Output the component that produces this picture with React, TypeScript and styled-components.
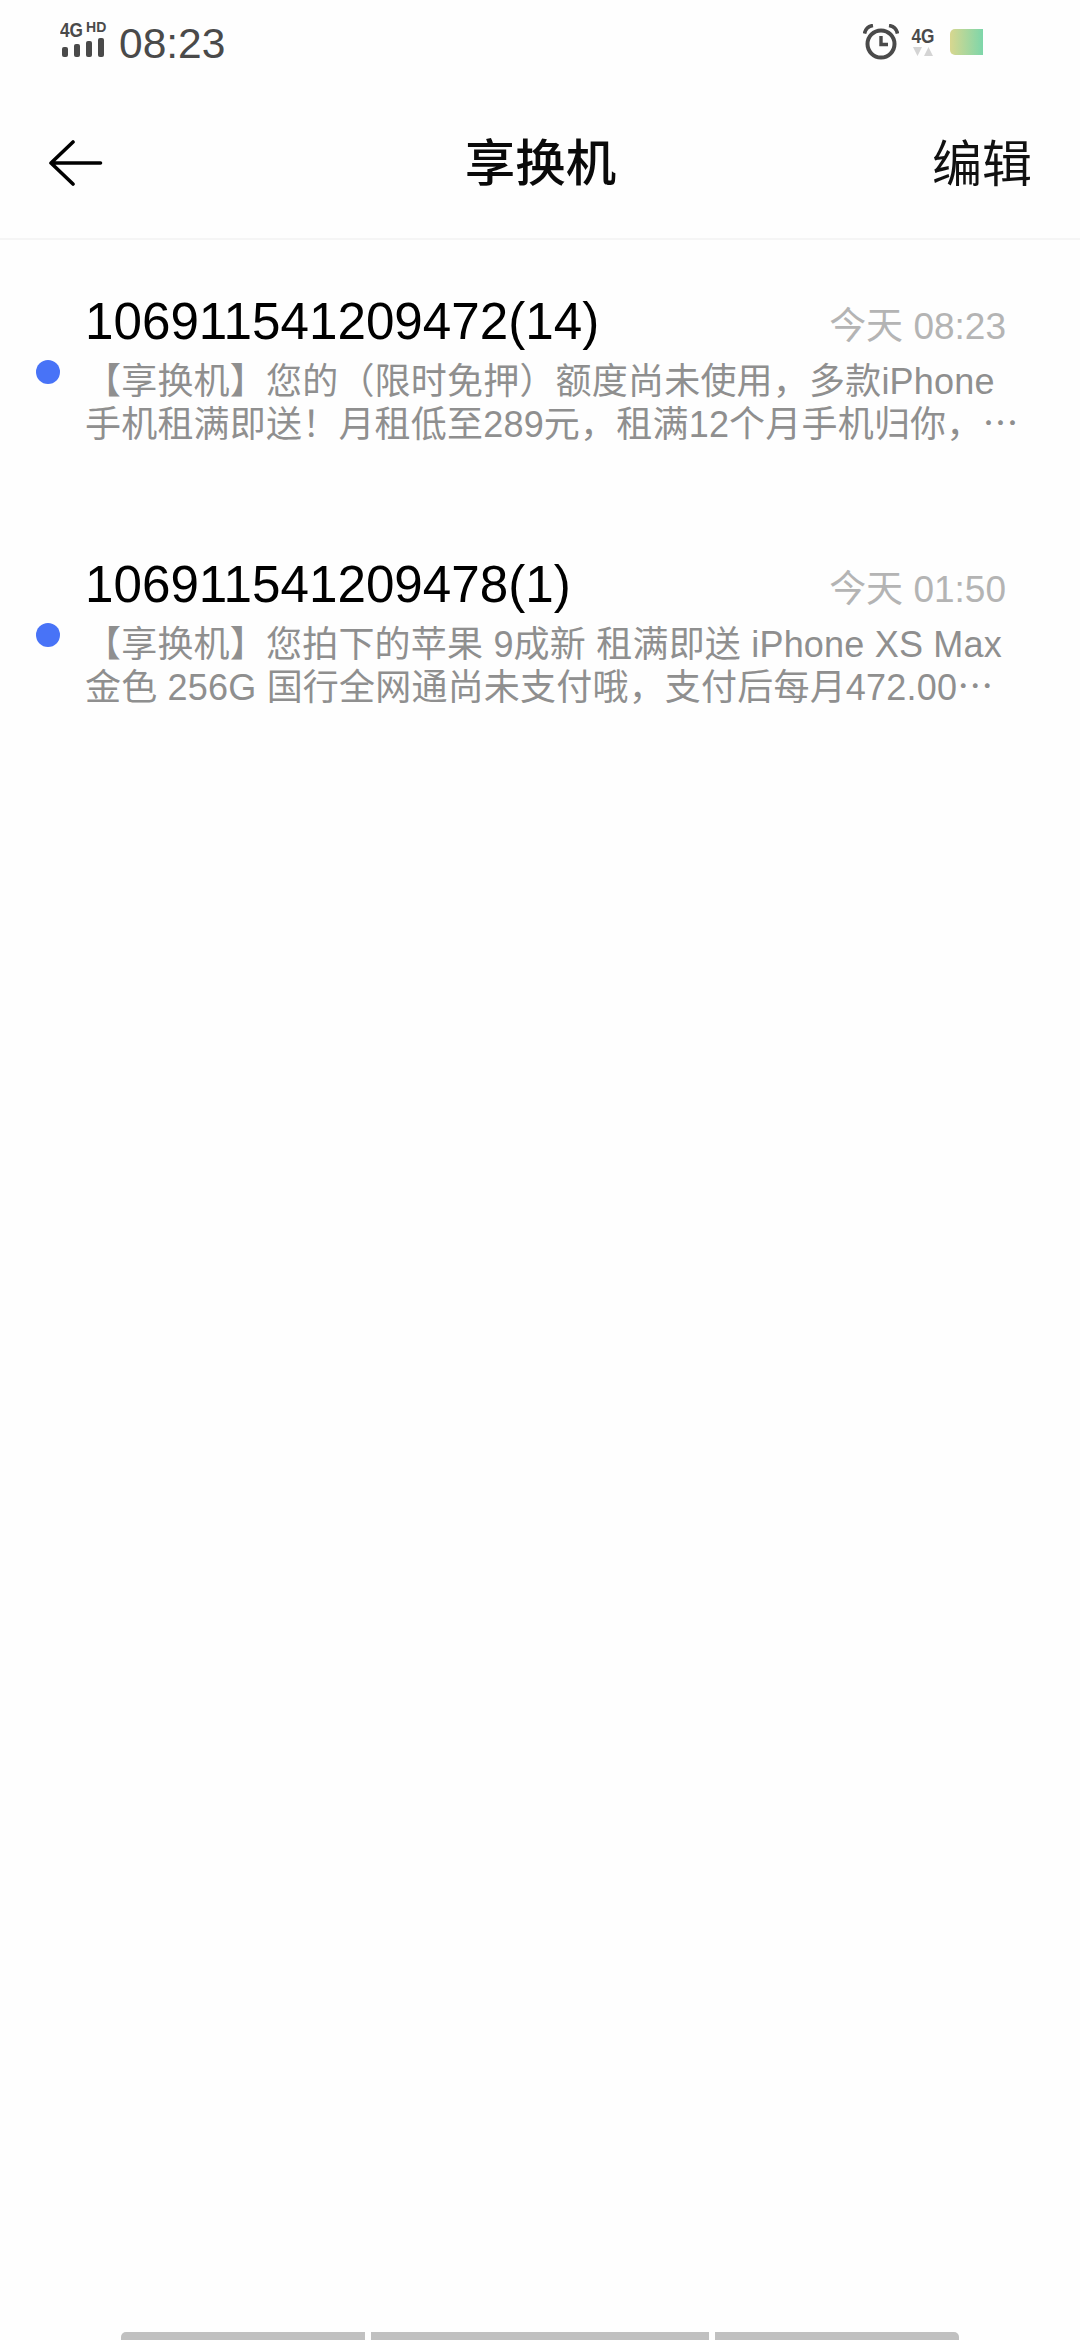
import {createGlobalStyle, styled} from "styled-components";

const GlobalStyle = createGlobalStyle`
  html, body {
    margin: 0;
    padding: 0;
    background: #fefefe;
    font-family: "Liberation Sans", "Noto Sans CJK SC", sans-serif;
  }
`;

const Screen = styled.div`
  width: 1080px;
  height: 2340px;
  display: flex;
  flex-direction: column;
  overflow: hidden;
  background: #fefefe;
`;

const StatusBar = styled.div`
  height: 90px;
  flex-shrink: 0;
  display: flex;
  align-items: flex-start;
  justify-content: space-between;
  padding: 22px 97px 0 60px;
  box-sizing: border-box;
  color: #4a4a4a;
`;

const StatusGroup = styled.div`
  display: flex;
  align-items: flex-start;
`;

const SignalColumn = styled.div`
  width: 46px;
  display: flex;
  flex-direction: column;
  margin-right: 13px;
`;

const SignalLabel = styled.div`
  display: flex;
  align-items: flex-start;
  height: 16px;
  font-weight: bold;
  white-space: nowrap;
`;

// the 4G glyphs are condensed in the status bar
const SignalType = styled.span`
  font-size: 21px;
  line-height: 16px;
  transform: scaleX(0.82);
  transform-origin: left top;
  margin-right: -5px;
`;

const SignalHd = styled.span`
  font-size: 14px;
  line-height: 11px;
  margin-left: 3px;
`;

const Clock = styled.div`
  font-size: 42.5px;
  line-height: 44px;
`;

const NetworkColumn = styled.div`
  width: 24px;
  margin: 5px 15px 0 15px;
  display: flex;
  flex-direction: column;
  align-items: center;
`;

const NetworkLabel = styled.div`
  font-weight: bold;
  font-size: 21px;
  line-height: 17px;
  transform: scaleX(0.82);
`;

const Battery = styled.div`
  width: 33px;
  height: 26px;
  margin-top: 7px;
  border-radius: 5px 0 0 5px;
  background: linear-gradient(90deg, #d8d78f, #7dd6aa);
`;

const Header = styled.header`
  height: 150px;
  flex-shrink: 0;
  display: grid;
  grid-template-columns: 1fr auto 1fr;
  align-items: center;
  padding: 0 48px 2px 49px;
  box-sizing: border-box;
  border-bottom: 2px solid #f5f5f5;
`;

const Title = styled.div`
  font-size: 50.5px;
  font-weight: 500;
  color: #0a0a0a;
  margin-bottom: 8px;
`;

const EditButton = styled.div`
  justify-self: end;
  font-size: 50px;
  color: #111;
  margin-bottom: 6px;
`;

const List = styled.div`
  display: flex;
  flex-direction: column;
  padding-top: 50px;
  flex: 1;
`;

const Row = styled.div`
  height: 263px;
  box-sizing: border-box;
  display: flex;
  align-items: flex-start;
  padding-left: 36px;
`;

const UnreadDot = styled.div`
  width: 24px;
  height: 24px;
  border-radius: 50%;
  background: #4873f7;
  margin: 70px 25px 0 0;
  flex-shrink: 0;
`;

const RowBody = styled.div`
  width: 935px;
`;

const RowTop = styled.div`
  display: flex;
  justify-content: space-between;
  align-items: flex-start;
  height: 70px;
  padding-right: 14px;
`;

const Sender = styled.div`
  font-size: 51.2px;
  line-height: 60px;
  margin-top: 2px;
  color: #000;
`;

const Time = styled.div`
  font-size: 37px;
  line-height: 44px;
  margin-top: 15px;
  color: #b4b4b4;
`;

const PreviewLine = styled.div`
  font-size: 36px;
  line-height: 43px;
  letter-spacing: 0.2px;
  color: #8f8f8f;
  white-space: nowrap;
  text-spacing-trim: space-all;
`;

const HomeBar = styled.div`
  display: flex;
  justify-content: center;
  gap: 6px;
  height: 8px;
  flex-shrink: 0;
`;

const HomeSegment = styled.div<{ $w: number; $side?: "left" | "right" }>`
  width: ${p => p.$w}px;
  background: #c0c0c0;
  border-radius: ${p => p.$side === "left" ? "5px 0 0 0" : p.$side === "right" ? "0 5px 0 0" : "0"};
`;

const messages = [
    {
        sender: "106911541209472(14)",
        time: "今天 08:23",
        lines: ["【享换机】您的（限时免押）额度尚未使用，多款iPhone", "手机租满即送！月租低至289元，租满12个月手机归你，⋯"]
    },
    {
        sender: "106911541209478(1)",
        time: "今天 01:50",
        lines: ["【享换机】您拍下的苹果 9成新 租满即送 iPhone XS Max", "金色 256G 国行全网通尚未支付哦，支付后每月472.00⋯"]
    }
];

export default function App() {
    return (
        <Screen>
            <GlobalStyle/>
            <StatusBar>
                <StatusGroup>
                    <SignalColumn>
                        <SignalLabel><SignalType>4G</SignalType><SignalHd>HD</SignalHd></SignalLabel>
                        <svg width="46" height="20" viewBox="0 0 46 20">
                            <rect x="2" y="9" width="6" height="10" rx="2" fill="#4a4a4a"/>
                            <rect x="14" y="6" width="6" height="13" rx="2" fill="#4a4a4a"/>
                            <rect x="26" y="3" width="6" height="16" rx="2" fill="#4a4a4a"/>
                            <rect x="38" y="0" width="6" height="19" rx="2" fill="#4a4a4a"/>
                        </svg>
                    </SignalColumn>
                    <Clock>08:23</Clock>
                </StatusGroup>
                <StatusGroup>
                    <svg width="36" height="36" viewBox="0 0 36 36" style={{marginTop: 2, marginRight: -3}} fill="none">
                        <circle cx="18" cy="20" r="13.500" stroke="#4a4a4a" strokeWidth="4"/>
                        <path d="M18 12v8.500h7" stroke="#4a4a4a" strokeWidth="3.400"/>
                        <path d="M1.500 9.500Q3 2.500 10 1.500M34.500 9.500Q33 2.500 26 1.500" stroke="#4a4a4a" strokeWidth="3.600"/>
                    </svg>
                    <NetworkColumn>
                        <NetworkLabel>4G</NetworkLabel>
                        <svg width="20" height="10" viewBox="0 0 20 10" style={{marginTop: 3}}>
                            <path d="M0 0h9l-4.500 9zM11 9h9l-4.500-9z" fill="#d4d4d4"/>
                        </svg>
                    </NetworkColumn>
                    <Battery/>
                </StatusGroup>
            </StatusBar>
            <Header>
                <svg width="54" height="46" viewBox="0 0 54 46" fill="none">
                    <path d="M51.500 23H3M24 2 2 23l22 21" stroke="#000" strokeWidth="3.600" strokeLinecap="round" strokeLinejoin="round"/>
                </svg>
                <Title>享换机</Title>
                <EditButton>编辑</EditButton>
            </Header>
            <List>
                {messages.map(m => (
                    <Row key={m.sender}>
                        <UnreadDot/>
                        <RowBody>
                            <RowTop>
                                <Sender>{m.sender}</Sender>
                                <Time>{m.time}</Time>
                            </RowTop>
                            {m.lines.map(line => <PreviewLine key={line}>{line}</PreviewLine>)}
                        </RowBody>
                    </Row>
                ))}
            </List>
            <HomeBar>
                <HomeSegment $w={244} $side="left"/>
                <HomeSegment $w={338}/>
                <HomeSegment $w={244} $side="right"/>
            </HomeBar>
        </Screen>
    );
}
